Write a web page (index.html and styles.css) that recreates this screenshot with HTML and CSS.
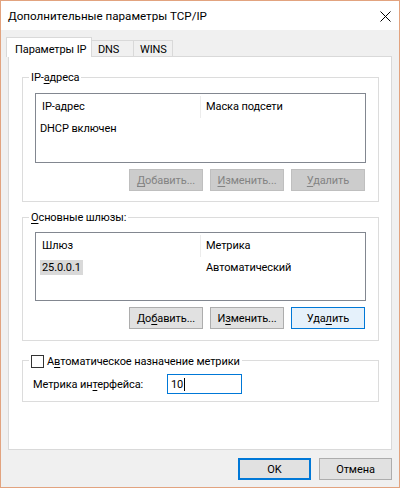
FILE: index.html
```html
<!DOCTYPE html>
<html lang="ru">
<head>
<meta charset="utf-8">
<title>Дополнительные параметры TCP/IP</title>
<link rel="stylesheet" href="styles.css">
</head>
<body>
<div class="window">
  <div class="titlebar">
    <span class="title">Дополнительные параметры TCP/IP</span>
    <svg class="close" width="11" height="11" viewBox="0 0 11 11"><path d="M0.5 0.5 L10.5 10.5 M10.5 0.5 L0.5 10.5" stroke="#000" stroke-width="1" fill="none"/></svg>
  </div>
  <div class="client">
    <div class="tabs">
      <div class="tab active">Параметры IP</div>
      <div class="tab dns">DNS</div>
      <div class="tab wins">WINS</div>
    </div>
    <div class="panel">
      <div class="group g1">
        <div class="group-title">IP-<u>а</u>дреса</div>
        <div class="list">
          <div class="list-head"><span class="col1">IP-адрес</span><span class="col2">Маска подсети</span></div>
          <div class="list-row"><span class="col1">DHCP включен</span></div>
        </div>
        <div class="buttons">
          <button class="btn disabled"><u>Д</u>обавить...</button>
          <button class="btn disabled"><u>И</u>зменить...</button>
          <button class="btn disabled"><u>У</u>далить</button>
        </div>
      </div>
      <div class="group g2">
        <div class="group-title"><u>О</u>сновные шлюзы:</div>
        <div class="list">
          <div class="list-head"><span class="col1">Шлюз</span><span class="col2">Метрика</span></div>
          <div class="list-row"><span class="col1"><span class="sel">25.0.0.1</span></span><span class="col2">Автоматический</span></div>
        </div>
        <div class="buttons">
          <button class="btn">До<u>б</u>авить...</button>
          <button class="btn">И<u>з</u>менить...</button>
          <button class="btn hot">Уда<u>л</u>ить</button>
        </div>
      </div>
      <div class="group g3">
        <div class="group-title check-title"><span class="checkbox"></span><span>А<u>в</u>томатическое назначение метрики</span></div>
        <div class="metric-row">
          <span class="metric-label">Метрика ин<u>т</u>ерфейса:</span>
          <span class="input">10<span class="caret"></span></span>
        </div>
      </div>
    </div>
    <div class="footer">
      <button class="btn default">OK</button>
      <button class="btn">Отмена</button>
    </div>
  </div>
</div>
</body>
</html>
```
FILE: styles.css
```css
html, body {
  margin: 0;
  padding: 0;
}
body {
  width: 400px;
  height: 488px;
  font-family: Roboto, "Noto Sans", sans-serif;
  font-size: 11px;
  letter-spacing: -0.1px;
  color: #000;
  overflow: hidden;
}
u {
  text-decoration: underline;
  text-underline-offset: 2px;
}
.window {
  box-sizing: border-box;
  width: 400px;
  height: 488px;
  border: 1px solid #e2a37f;
  background: #f0f0f0;
  display: flex;
  flex-direction: column;
}
.titlebar {
  height: 29px;
  background: #fff;
  display: flex;
  align-items: center;
  justify-content: space-between;
  padding: 0 8px 0 7px;
  flex-shrink: 0;
}
.title {
  font-size: 11.6px;
  letter-spacing: 0;
  line-height: 16px;
  margin-top: 1px;
}
.close {
  display: block;
  margin-top: 1px;
}
.client {
  flex: 1;
  padding: 7px 7px 0 7px;
  display: flex;
  flex-direction: column;
}
.tabs {
  display: flex;
  align-items: flex-end;
  height: 20px;
  margin-left: -2px;
  margin-bottom: -1px;
  position: relative;
  z-index: 1;
}
.tab {
  box-sizing: border-box;
  height: 16px;
  line-height: 15px;
  border: 1px solid #d9d9d9;
  border-bottom: none;
  border-left: none;
  background: #f0f0f0;
  padding: 1px 0 0 6px;
  margin-bottom: 1px;
  white-space: nowrap;
}
.tab.active {
  height: 20px;
  width: 86px;
  background: #fff;
  border-left: 1px solid #d9d9d9;
  padding: 4px 0 0 8px;
  margin-bottom: 0;
}
.tab.dns { width: 42px; }
.tab.wins { width: 39px; }
.panel {
  box-sizing: border-box;
  height: 394px;
  background: #fff;
  border: 1px solid #d9d9d9;
  padding: 20px 12px 0 13px;
  flex-shrink: 0;
}
.group {
  border: 1px solid #dcdcdc;
  padding: 0 12px 10px 12px;
}
.g2 {
  margin-top: 15px;
  padding-bottom: 11px;
}
.g3 {
  margin-top: 19px;
  padding-bottom: 7px;
}
.group-title {
  margin-top: -8px;
  margin-left: -6px;
  height: 15px;
  line-height: 15px;
  padding: 0 2px;
  background: #fff;
  width: fit-content;
  white-space: nowrap;
}
.check-title {
  display: flex;
  align-items: center;
  gap: 3px;
  margin-top: -7px;
}
.checkbox {
  box-sizing: border-box;
  width: 13px;
  height: 13px;
  border: 1px solid #333;
  background: #fff;
}
.list {
  box-sizing: border-box;
  height: 70px;
  margin-top: 8px;
  border: 1px solid #828790;
  background: #fff;
}
.g2 .list {
  margin-top: 7px;
  height: 69px;
}
.list-head, .list-row {
  display: flex;
  align-items: center;
  line-height: 15px;
}
.list-head {
  height: 24px;
  padding-top: 1px;
  box-sizing: border-box;
}
.list-row {
  height: 21px;
}
.col1 {
  box-sizing: border-box;
  width: 165px;
  padding-left: 6px;
}
.list-head .col1 {
  border-right: 1px solid #ececec;
  height: 22px;
  display: flex;
  align-items: center;
}
.col2 {
  padding-left: 5px;
}
.list-row .col1 {
  padding-left: 4px;
}
.list-row .col2 {
  padding-left: 5px;
}
.sel {
  background: #d9d9d9;
  padding: 1px 2px;
}
.buttons {
  display: flex;
  justify-content: flex-end;
  gap: 7px;
  margin-top: 6px;
  margin-right: 1px;
}
.btn {
  box-sizing: border-box;
  width: 74px;
  height: 22px;
  padding: 0;
  margin: 0;
  font-family: inherit;
  font-size: 11px;
  letter-spacing: -0.1px;
  line-height: 15px;
  color: #000;
  background: #e1e1e1;
  border: 1px solid #adadad;
  border-radius: 0;
}
.btn.disabled {
  background: #cccccc;
  border-color: #bfbfbf;
  color: #838383;
}
.btn.hot {
  background: #e5f1fb;
  border-color: #0078d7;
}
.btn.default {
  border: 2px solid #0078d7;
}
.metric-row {
  display: flex;
  align-items: center;
  margin-top: 5px;
  margin-left: -2px;
}
.metric-label {
  width: 134px;
  line-height: 15px;
}
.input {
  box-sizing: border-box;
  width: 75px;
  height: 20px;
  border: 1px solid #0078d7;
  line-height: 15px;
  padding: 1px 0 0 3px;
  display: flex;
  align-items: center;
}
.caret {
  display: inline-block;
  width: 1px;
  height: 13px;
  background: #000;
  margin-left: 1px;
}
.footer {
  display: flex;
  justify-content: flex-end;
  gap: 8px;
  margin-top: 8px;
}
.footer .btn {
  width: 73px;
}
```
